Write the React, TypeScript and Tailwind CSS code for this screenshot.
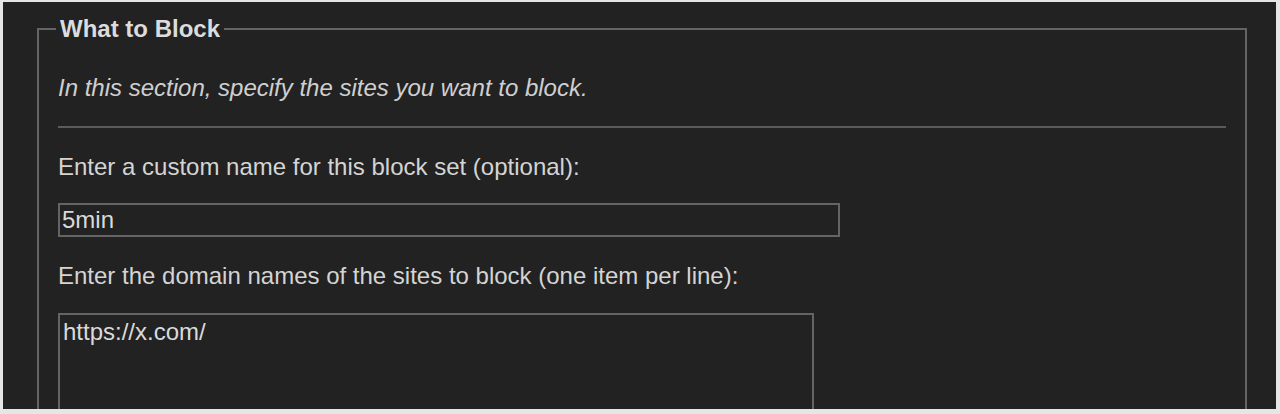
import React from "react";

export default function App() {
  return (
    <div
      className="w-[1280px] h-[414px] overflow-hidden bg-[#e6e6e6] pt-[2px] pl-[3px] pr-[4px] pb-[5px]"
      style={{ fontFamily: '"Liberation Sans", Arial, sans-serif' }}
    >
      <div className="w-full h-full bg-[#222222] overflow-hidden pt-[13px] pl-[34px] pr-[29px] text-[#d4d4d4] text-[24px] leading-[28px]">
        <fieldset className="border-2 border-[#646464] pl-[19px] pr-[19px] m-0 min-w-0">
          <legend className="ml-[-2px] px-[4px] font-bold text-[#dcdcdc] leading-[28px]">What to Block</legend>
          <p className="mt-[31px] italic text-[#cfcfcf]">In this section, specify the sites you want to block.</p>
          <hr className="mt-[24px] border-0 border-t-2 border-[#5a5a5a]" />
          <p className="mt-[25px]">Enter a custom name for this block set (optional):</p>
          <div className="mt-[22px] w-[782px] h-[34px] border-2 border-[#646464] pl-[2px] leading-[30px] text-[#dadada]">
            5min
          </div>
          <p className="mt-[25px]">Enter the domain names of the sites to block (one item per line):</p>
          <div className="mt-[23px] w-[756px] h-[160px] border-2 border-[#646464] pl-[3px] pt-[3px] leading-[28px] text-[#dadada]">
            https://x.com/
          </div>
        </fieldset>
      </div>
    </div>
  );
}
